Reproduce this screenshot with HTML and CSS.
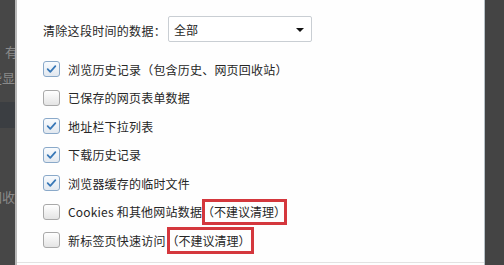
FILE: index.html
```html
<!DOCTYPE html>
<html>
<head>
<meta charset="utf-8">
<link rel="stylesheet" href="styles.css">
</head>
<body>
<div class="screen">
  <div class="side-left">
    <div class="bg-line t1"><span>有</span></div>
    <div class="bg-line t2"><span>些显</span></div>
    <div class="bg-band"></div>
    <div class="bg-line t3"><span>回收</span></div>
  </div>
  <div class="side-edge"></div>
  <div class="dialog">
    <div class="range-row">
      <span class="range-label">清除这段时间的数据：</span>
      <div class="select">
        <span>全部</span>
        <span class="arrow"></span>
      </div>
    </div>
    <ul class="options">
      <li class="opt"><span class="cb checked"><svg viewBox="0 0 16 16"><path d="M3.6 8.2 L6.6 11.2 L12.4 4.8" /></svg></span><span class="lbl">浏览历史记录（包含历史、网页回收站）</span></li>
      <li class="opt"><span class="cb"></span><span class="lbl">已保存的网页表单数据</span></li>
      <li class="opt"><span class="cb checked"><svg viewBox="0 0 16 16"><path d="M3.6 8.2 L6.6 11.2 L12.4 4.8" /></svg></span><span class="lbl">地址栏下拉列表</span></li>
      <li class="opt"><span class="cb checked"><svg viewBox="0 0 16 16"><path d="M3.6 8.2 L6.6 11.2 L12.4 4.8" /></svg></span><span class="lbl">下载历史记录</span></li>
      <li class="opt"><span class="cb checked"><svg viewBox="0 0 16 16"><path d="M3.6 8.2 L6.6 11.2 L12.4 4.8" /></svg></span><span class="lbl">浏览器缓存的临时文件</span></li>
      <li class="opt"><span class="cb"></span><span class="lbl">Cookies 和其他网站数据<span class="warn">（不建议清理）</span></span></li>
      <li class="opt"><span class="cb"></span><span class="lbl">新标签页快速访问<span class="warn w2">（不建议清理）</span></span></li>
    </ul>
    <div class="bottom-line"></div>
  </div>
  <div class="side-right"></div>
</div>
</body>
</html>
```

FILE: styles.css
```css
html, body {
  margin: 0;
  padding: 0;
  width: 504px;
  height: 265px;
  overflow: hidden;
  background: #464646;
}
.screen {
  display: flex;
  width: 504px;
  height: 265px;
  font-family: "Noto Sans CJK SC", "Microsoft YaHei", sans-serif;
  font-size: 12px;
  color: #262626;
}
.side-left {
  width: 15px;
  background: #474747;
  display: flex;
  flex-direction: column;
  overflow: hidden;
}
.bg-line {
  height: 16px;
  display: flex;
  justify-content: flex-end;
  align-items: center;
  white-space: nowrap;
  color: #8a8a8a;
  font-size: 13px;
}
.bg-line span { margin-right: -3px; }
.t1 { margin-top: 43px; }
.t2 { margin-top: 10px; }
.t2 span { margin-right: 0; }
.bg-band {
  margin-top: 17px;
  height: 26px;
  background: #3b3e42;
}
.t3 { margin-top: 60px; }
.t3 span { margin-right: 0; }
.side-edge {
  width: 2px;
  background: #b9b9b9;
}
.dialog {
  width: 467px;
  background: #fefefe;
  padding-left: 26px;
  box-sizing: border-box;
  display: flex;
  flex-direction: column;
  position: relative;
}
.range-row {
  margin-top: 16px;
  height: 26px;
  display: flex;
  align-items: center;
}
.range-label {
  width: 125px;
  padding-top: 3px;
  letter-spacing: 0.3px;
}
.select {
  width: 144px;
  height: 26px;
  box-sizing: border-box;
  border: 1px solid #c9ced3;
  border-radius: 2px;
  background: #fff;
  display: flex;
  align-items: center;
  justify-content: space-between;
  padding: 0 7px 0 5px;
  color: #1e1e1e;
}
.arrow {
  width: 0;
  height: 0;
  border-left: 4px solid transparent;
  border-right: 4px solid transparent;
  border-top: 4px solid #111;
  margin-top: 2px;
}
.options {
  list-style: none;
  margin: 13px 0 0 0;
  padding: 0;
}
.opt {
  height: 28.5px;
  display: flex;
  align-items: center;
}
.cb {
  width: 17px;
  height: 16px;
  box-sizing: border-box;
  border: 1px solid #a9a9a9;
  border-radius: 3px;
  background: linear-gradient(#ffffff, #e4e4e4);
  margin-right: 8px;
  flex: none;
  display: flex;
  align-items: center;
  justify-content: center;
}
.cb.checked {
  border-color: #8aa9c9;
  background: linear-gradient(#f8fbfe, #e2e8ef);
}
.cb svg {
  width: 15px;
  height: 14px;
}
.cb svg path {
  fill: none;
  stroke: #3777b7;
  stroke-width: 2;
  stroke-linecap: round;
  stroke-linejoin: round;
}
.lbl {
  display: flex;
  align-items: center;
  white-space: nowrap;
  letter-spacing: 0.2px;
}
.warn {
  display: inline-block;
  height: 26px;
  line-height: 26px;
  width: 85px;
  box-sizing: border-box;
  box-shadow: inset 0 0 0 3px #d4373d;
  letter-spacing: 0;
}
.warn.w2 {
  width: 87px;
  height: 27px;
  line-height: 27px;
  margin-left: 1px;
}
.bottom-line {
  position: absolute;
  left: 0;
  right: 0;
  top: 262px;
  height: 1px;
  background: #e2e2e2;
}
.side-right {
  flex: 1;
  background: #444;
  border-left: 1px solid #b7c2c8;
}
```
